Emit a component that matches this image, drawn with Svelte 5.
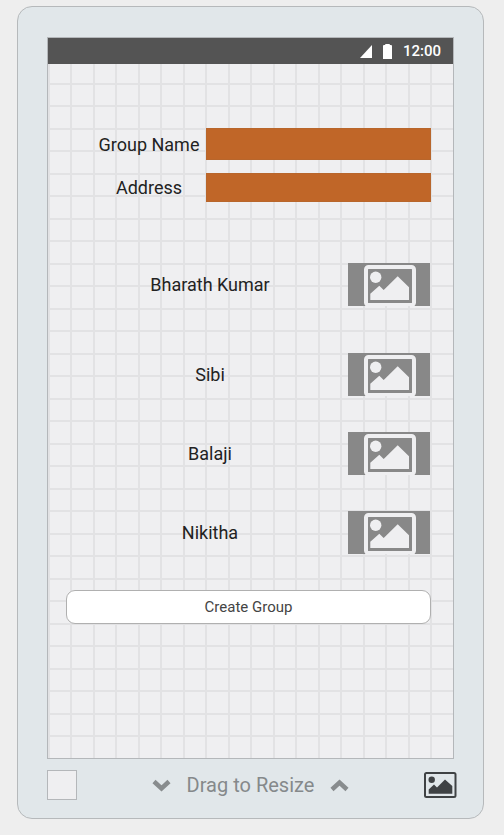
<script>
  const fields = [
    { id: 'group-name', label: 'Group Name' },
    { id: 'address', label: 'Address' }
  ];
  const members = ['Bharath Kumar', 'Sibi', 'Balaji', 'Nikitha'];
</script>

<div class="device">
  <main class="screen">
    <header class="status">
      <svg width="12" height="13" viewBox="0 0 12 13" aria-hidden="true"><path d="M0 13L12 0V13Z" fill="#fff" /></svg>
      <svg width="9" height="15" viewBox="0 0 9 15" aria-hidden="true"><path d="M0 2Q0 1 1 1H2Q2 0 3 0H6Q7 0 7 1H8Q9 1 9 2V15H0Z" fill="#fff" /></svg>
      <time>12:00</time>
    </header>

    <form onsubmit={(e) => e.preventDefault()}>
      <div class="fields">
        {#each fields as field}
          <div class="field">
            <label for={field.id}>{field.label}</label>
            <input id={field.id} type="text" />
          </div>
        {/each}
      </div>

      <ul>
        {#each members as name}
          <li>
            <span>{name}</span>
            <svg class="photo" width="82" height="43" viewBox="0 0 82 43" role="img" aria-label={name}>
              <rect width="82" height="43" fill="#888" />
              <rect x="18" y="4" width="48" height="38" rx="2.5" fill="none" stroke="#efeff1" stroke-width="4" />
              <circle cx="27.7" cy="14.3" r="5.7" fill="#efeff1" />
              <path d="M22.3 37V30.7L31.3 22.7L35.7 27L49.7 13.3L61 24.3V37Z" fill="#efeff1" />
            </svg>
          </li>
        {/each}
      </ul>

      <button class="create" type="submit">Create Group</button>
    </form>
  </main>

  <footer>
    <input type="checkbox" aria-label="Select screen" />
    <div class="resize">
      <button type="button" aria-label="Shrink">
        <svg width="19" height="13" viewBox="0 0 19 13"><path d="M2 2.5L9.5 9.5L17 2.5" /></svg>
      </button>
      <span>Drag to Resize</span>
      <button type="button" aria-label="Grow">
        <svg width="19" height="13" viewBox="0 0 19 13"><path d="M2 10.5L9.5 3.5L17 10.5" /></svg>
      </button>
    </div>
    <button class="picture" type="button" aria-label="Background image">
      <svg width="33" height="26" viewBox="0 0 33 26">
        <rect x="1" y="1" width="30.5" height="24" rx="1.5" fill="none" stroke="#3f4244" stroke-width="2" />
        <circle cx="7.7" cy="7.7" r="3.2" fill="#3f4244" />
        <path d="M4.7 21.7V17.5L10 12.5L13 15.5L21 7.5L28.3 14V21.7Z" fill="#3f4244" />
      </svg>
    </button>
  </footer>
</div>

<style>
  :global(body) {
    margin: 0;
    background: #eee;
  }

  .device {
    box-sizing: border-box;
    margin: 6px 20px 16px 17px;
    padding: 30px 29px 18px;
    border: 1px solid #b6b9bb;
    border-radius: 15px;
    background: #e1e7ea;
    color: #222;
    font-family: Roboto, "Liberation Sans", sans-serif;
  }

  .screen {
    border: 1px solid #b4b7ba;
    background-color: #efeff1;
    background-image:
      linear-gradient(90deg, #e2e2e4 2px, transparent 2px),
      linear-gradient(90deg, #e2e2e4 2px, transparent 2px),
      linear-gradient(#e2e2e4 2px, transparent 2px),
      linear-gradient(#e2e2e4 2px, transparent 2px);
    background-size: 45px 45px;
    background-position: 22px 0, 0 0, 0 0, 0 22px;
  }

  .status {
    display: flex;
    align-items: center;
    justify-content: flex-end;
    gap: 11px;
    height: 26px;
    padding-right: 12px;
    background: #545454;
    color: #fff;
    font-size: 15px;
    font-weight: 500;
  }

  form {
    padding: 64px 22px 134px 18px;
  }

  .fields {
    display: grid;
    gap: 13px;
    padding-left: 26px;
  }

  .field {
    display: grid;
    grid-template-columns: 114px 1fr;
    align-items: center;
    font-size: 18px;
    text-align: center;
  }

  .field input {
    box-sizing: border-box;
    width: 100%;
    height: 32px;
    padding: 0 8px;
    border: 1px solid #b8662c;
    border-radius: 0;
    background: #c06628;
    color: #fff;
    font: inherit;
  }

  .field + .field input {
    height: 29px;
  }

  ul {
    display: grid;
    gap: 36px;
    margin: 61px 0 36px;
    padding: 0 1px 0 6px;
    list-style: none;
  }

  li {
    display: grid;
    grid-template-columns: 1fr 82px;
    align-items: center;
    font-size: 18px;
    text-align: center;
  }

  li:first-child {
    margin-bottom: 11px;
  }

  .photo {
    display: block;
  }

  .create {
    display: block;
    width: 100%;
    height: 34px;
    padding: 0;
    border: 1px solid #b0b0b0;
    border-radius: 9px;
    background: #fff;
    color: #444;
    font: 15px Roboto, "Liberation Sans", sans-serif;
  }

  footer {
    display: flex;
    align-items: center;
    justify-content: space-between;
    margin: 11px -3px 0 0;
  }

  footer input {
    appearance: none;
    box-sizing: border-box;
    width: 30px;
    height: 30px;
    margin: 0;
    border: 1px solid #b4b7ba;
    background: #efeff1;
  }

  .resize {
    display: flex;
    align-items: center;
    gap: 16px;
    color: #85898b;
    font-size: 20px;
  }

  footer button {
    display: block;
    padding: 0;
    border: 0;
    background: none;
    color: inherit;
  }

  footer svg {
    display: block;
  }

  .resize path {
    fill: none;
    stroke: #888c8e;
    stroke-width: 4.5;
  }
</style>
